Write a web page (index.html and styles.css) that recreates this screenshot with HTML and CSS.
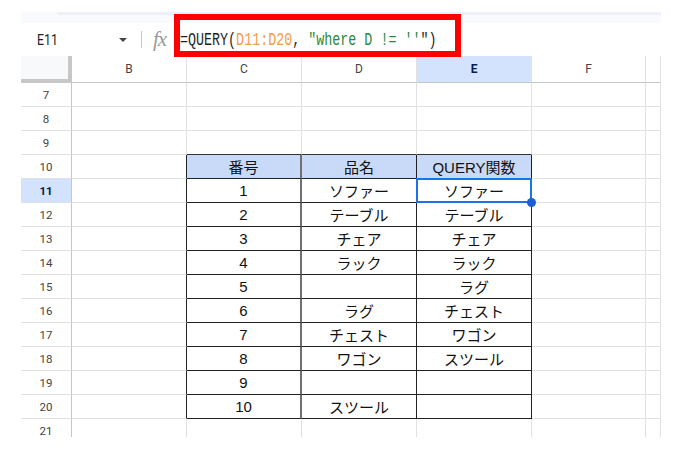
FILE: index.html
```html
<!DOCTYPE html>
<html lang="ja">
<head>
<meta charset="utf-8">
<title>QUERY</title>
<link rel="stylesheet" href="styles.css">
</head>
<body>
<div class="app">
  <div class="strip"><div class="strip-band"></div></div>
  <div class="fbar">
    <div class="namebox"><span class="ref">E11</span><span class="caret"></span></div>
    <div class="sep"></div>
    <div class="fx">fx</div>
    <div class="formula"><span class="ftext"><span class="k">=QUERY(</span><span class="r">D11:D20</span><span class="k">, </span><span class="s">"where D != ''</span><span class="k">")</span></span></div>
  </div>
  <div class="annot"></div>
  <div class="sheet">
    <div class="row hdr">
      <div class="c rh corner"></div>
      <div class="c cb">B</div>
      <div class="c cc">C</div>
      <div class="c cd">D</div>
      <div class="c ce selh">E</div>
      <div class="c cf">F</div>
      <div class="c cg"></div>
    </div>
    <div class="row"><div class="c rh">7</div><div class="c cb"></div><div class="c cc"></div><div class="c cd"></div><div class="c ce"></div><div class="c cf"></div><div class="c cg"></div></div>
    <div class="row"><div class="c rh">8</div><div class="c cb"></div><div class="c cc"></div><div class="c cd"></div><div class="c ce"></div><div class="c cf"></div><div class="c cg"></div></div>
    <div class="row"><div class="c rh">9</div><div class="c cb"></div><div class="c cc tt"></div><div class="c cd tt"></div><div class="c ce tt"></div><div class="c cf"></div><div class="c cg"></div></div>
    <div class="row"><div class="c rh">10</div><div class="c cb tl"></div><div class="c cc t th mid">番号</div><div class="c cd t th">品名</div><div class="c ce t th">QUERY関数</div><div class="c cf"></div><div class="c cg"></div></div>
    <div class="row"><div class="c rh selh">11</div><div class="c cb tl"></div><div class="c cc t mid">1</div><div class="c cd t">ソファー</div><div class="c ce t sel">ソファー</div><div class="c cf"></div><div class="c cg"></div></div>
    <div class="row"><div class="c rh">12</div><div class="c cb tl"></div><div class="c cc t mid">2</div><div class="c cd t">テーブル</div><div class="c ce t">テーブル</div><div class="c cf"></div><div class="c cg"></div></div>
    <div class="row"><div class="c rh">13</div><div class="c cb tl"></div><div class="c cc t mid">3</div><div class="c cd t">チェア</div><div class="c ce t">チェア</div><div class="c cf"></div><div class="c cg"></div></div>
    <div class="row"><div class="c rh">14</div><div class="c cb tl"></div><div class="c cc t mid">4</div><div class="c cd t">ラック</div><div class="c ce t">ラック</div><div class="c cf"></div><div class="c cg"></div></div>
    <div class="row"><div class="c rh">15</div><div class="c cb tl"></div><div class="c cc t mid">5</div><div class="c cd t"></div><div class="c ce t">ラグ</div><div class="c cf"></div><div class="c cg"></div></div>
    <div class="row"><div class="c rh">16</div><div class="c cb tl"></div><div class="c cc t mid">6</div><div class="c cd t">ラグ</div><div class="c ce t">チェスト</div><div class="c cf"></div><div class="c cg"></div></div>
    <div class="row"><div class="c rh">17</div><div class="c cb tl"></div><div class="c cc t mid">7</div><div class="c cd t">チェスト</div><div class="c ce t">ワゴン</div><div class="c cf"></div><div class="c cg"></div></div>
    <div class="row"><div class="c rh">18</div><div class="c cb tl"></div><div class="c cc t mid">8</div><div class="c cd t">ワゴン</div><div class="c ce t">スツール</div><div class="c cf"></div><div class="c cg"></div></div>
    <div class="row"><div class="c rh">19</div><div class="c cb tl"></div><div class="c cc t mid">9</div><div class="c cd t"></div><div class="c ce t"></div><div class="c cf"></div><div class="c cg"></div></div>
    <div class="row"><div class="c rh">20</div><div class="c cb tl"></div><div class="c cc t mid">10</div><div class="c cd t">スツール</div><div class="c ce t"></div><div class="c cf"></div><div class="c cg"></div></div>
    <div class="row"><div class="c rh">21</div><div class="c cb"></div><div class="c cc"></div><div class="c cd"></div><div class="c ce"></div><div class="c cf"></div><div class="c cg"></div></div>
  </div>
</div>
</body>
</html>
```
FILE: styles.css
```css
* { box-sizing: border-box; margin: 0; padding: 0; }
html, body { background: #fff; }
body {
  width: 682px;
  height: 462px;
  overflow: hidden;
  font-family: Roboto, "Liberation Sans", sans-serif;
}
.app {
  position: relative;
  padding: 12px 21px 0 21px;
  width: 682px;
}
.strip {
  width: 640px;
  height: 11px;
  background: #f8fafd;
}
.strip-band {
  margin-left: 36px;
  height: 3px;
  background: #edf2fa;
  border-bottom-left-radius: 3px;
}
.fbar {
  width: 640px;
  height: 33px;
  display: flex;
  align-items: center;
  background: #fff;
}
.namebox {
  width: 112px;
  height: 100%;
  display: flex;
  align-items: center;
  justify-content: space-between;
  padding: 0 6px 0 16px;
}
.ref {
  font-size: 15px;
  color: #1f1f1f;
  display: inline-block;
  transform: scaleX(0.82);
  transform-origin: left center;
}
.caret {
  width: 0;
  height: 0;
  border-left: 4px solid transparent;
  border-right: 4px solid transparent;
  border-top: 4px solid #444;
  margin-top: 1px;
}
.sep {
  width: 1px;
  height: 17px;
  background: #c4c7c5;
  margin: 0 11px 0 8px;
}
.fx {
  width: 22px;
  font-family: "Liberation Serif", serif;
  font-style: italic;
  font-size: 21px;
  color: #9a9a9a;
  letter-spacing: -1px;
  line-height: 1;
}
.formula {
  margin-left: 5px;
  flex: 1;
  white-space: pre;
}
.ftext {
  display: inline-block;
  font-family: "Liberation Mono", "DejaVu Sans Mono", monospace;
  font-size: 18px;
  transform: scaleX(0.742);
  transform-origin: left center;
  white-space: pre;
}
.k { color: #1f1f1f; }
.r { color: #f29d4b; }
.s { color: #2a8a3c; }
.annot {
  position: absolute;
  left: 174px;
  top: 14px;
  width: 287px;
  height: 43px;
  border: 6px solid #ff0000;
}
.sheet {
  width: 640px;
  height: 381px;
  overflow: hidden;
}
.row {
  display: flex;
  height: 24px;
}
.row.hdr { height: 27px; }
.c {
  flex: none;
  height: 100%;
  border-right: 1px solid #e1e1e1;
  border-bottom: 1px solid #e1e1e1;
  display: flex;
  align-items: center;
  justify-content: center;
  font-family: "Liberation Sans", "Noto Sans CJK JP", sans-serif;
  font-size: 15px;
  color: #111;
  white-space: nowrap;
}
.rh {
  width: 51px;
  border-right-color: #c4c7c5;
  font-family: Roboto, "Liberation Sans", sans-serif;
  font-size: 11.5px;
  color: #444;
}
.cb, .cc, .cd, .ce { width: 115px; }
.cf { width: 114px; }
.cg { width: 15px; }
.hdr .c {
  border-bottom-color: #c4c7c5;
  font-family: Roboto, "Liberation Sans", sans-serif;
  font-size: 12px;
  color: #444;
}
.hdr .corner {
  background: #f8f9fa;
  border-right: 4px solid #c7c7c7;
  border-bottom: 4px solid #c7c7c7;
}
.c.selh {
  background: #d3e3fd;
  color: #041e49;
  font-weight: bold;
}
.tl { border-right-color: #222; }
.tt { border-bottom-color: #333; }
.t {
  border-right-color: #222;
  border-bottom-color: #222;
}
.t.mid { border-right: 2px solid #707070; }
.th { background: #c9daf8; }
.sel { position: relative; }
.sel::after {
  content: "";
  position: absolute;
  left: -1px;
  top: -1px;
  right: -1px;
  bottom: -1px;
  border: 2px solid #1a73e8;
}
.sel::before {
  content: "";
  position: absolute;
  right: -5px;
  bottom: -5px;
  width: 9px;
  height: 9px;
  border-radius: 50%;
  background: #1a5fd6;
  z-index: 2;
}
```
